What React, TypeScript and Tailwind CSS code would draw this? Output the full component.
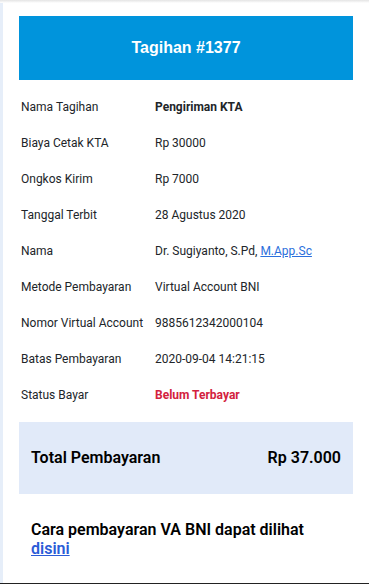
import React from "react";

const rows: { label: string; value: React.ReactNode }[] = [
  { label: "Nama Tagihan", value: <span className="font-bold">Pengiriman KTA</span> },
  { label: "Biaya Cetak KTA", value: "Rp 30000" },
  { label: "Ongkos Kirim", value: "Rp 7000" },
  { label: "Tanggal Terbit", value: "28 Agustus 2020" },
  {
    label: "Nama",
    value: (
      <span>
        Dr. Sugiyanto, S.Pd, <span className="text-[#2b6fdc] underline">M.App.Sc</span>
      </span>
    ),
  },
  { label: "Metode Pembayaran", value: "Virtual Account BNI" },
  { label: "Nomor Virtual Account", value: "9885612342000104" },
  { label: "Batas Pembayaran", value: "2020-09-04 14:21:15" },
  { label: "Status Bayar", value: <span className="font-bold text-[#d3213d]">Belum Terbayar</span> },
];

export default function App() {
  return (
    <div className="w-[369px] h-[584px] bg-white flex flex-col overflow-hidden" style={{ fontFamily: "Roboto, 'Noto Sans', sans-serif" }}>
      <div className="h-[3px] bg-gradient-to-b from-[#e4e4e4] to-white" />
      <div className="flex flex-1">
        <div className="w-[3px] bg-[#e6eef9]" />
        <div className="flex-1 pl-4 pr-4 pt-[13px]">
          <div
            className="h-16 bg-[#0094dc] flex items-center justify-center text-white font-bold text-[16px]"
            style={{ fontFamily: "'Liberation Sans', Arial, sans-serif" }}
          >
            Tagihan #1377
          </div>
          <div className="mt-[9px] flex flex-col">
            {rows.map((r) => (
              <div key={r.label} className="h-9 flex items-center text-[12px] text-[#212529]">
                <div className="w-[136px] pl-[2px]">{r.label}</div>
                <div>{r.value}</div>
              </div>
            ))}
          </div>
          <div className="mt-[9px] h-[72px] bg-[#e1eaf9] flex items-center justify-between px-3 text-[16px] font-semibold text-black">
            <span>Total Pembayaran</span>
            <span>Rp 37.000</span>
          </div>
          <div className="mt-[26px] px-3 text-[16px] font-semibold text-black leading-[19px]">
            Cara pembayaran VA BNI dapat dilihat <span className="text-[#2a5bd7] underline">disini</span>
          </div>
        </div>
      </div>
      <div className="h-[1px] bg-[#222]" />
    </div>
  );
}
